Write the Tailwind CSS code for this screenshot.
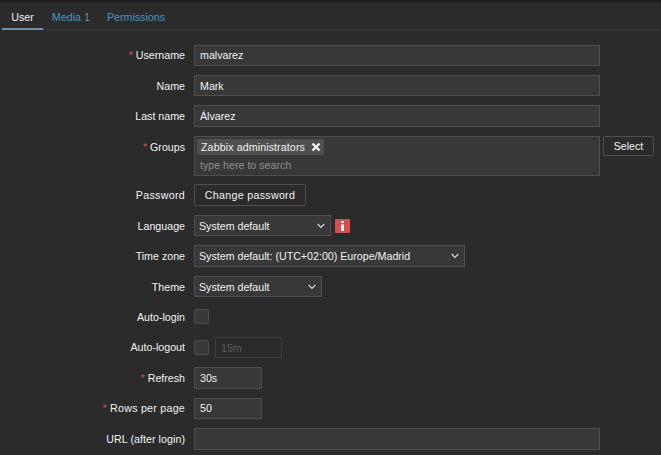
<!DOCTYPE html>
<html lang="en">
<head>
<meta charset="UTF-8" />
<title>User</title>
<script src="https://cdn.jsdelivr.net/npm/@tailwindcss/browser@4"></script>
</head>
<body class="bg-[#2b2b2b] h-[455px] overflow-hidden font-['Liberation_Sans',Arial,sans-serif] text-[10.67px] text-[#f2f2f2]">
  <div class="h-[2px] bg-[#1e1e1e]"></div>

  <!-- Tabs -->
  <div class="flex h-[28px] ml-[2px] border-b border-[#383838] leading-[30px]">
    <div class="w-[41px] text-center border-b-2 border-[#6f8fa3] h-[28px]">User</div>
    <div class="ml-[9px] text-[#4796c4]">Media <span class="text-[#768d99]">1</span></div>
    <div class="ml-[17px] text-[#4796c4]">Permissions</div>
  </div>

  <!-- Form -->
  <div class="flex flex-col pt-[15px] pr-[7px] text-[#f2f2f2]">
    <div class="flex items-center h-[21px]">
      <label class="w-[185px] text-right pb-[1px]"><span class="text-[#d04f4f]">* </span>Username</label>
      <input value="malvarez" class="ml-[9px] w-[406px] h-[21px] px-[5px] pb-[1px] bg-[#383838] border border-[#4f4f4f] outline-none" />
    </div>
    <div class="flex items-center h-[21px] mt-[9px]">
      <label class="w-[185px] text-right">Name</label>
      <input value="Mark" class="ml-[9px] w-[406px] h-[21px] px-[5px] bg-[#383838] border border-[#4f4f4f] outline-none" />
    </div>
    <div class="flex items-center h-[22px] mt-[9px]">
      <label class="w-[185px] text-right">Last name</label>
      <input value="Álvarez" class="ml-[9px] w-[406px] h-[22px] px-[5px] bg-[#383838] border border-[#4f4f4f] outline-none" />
    </div>

    <div class="flex items-start mt-[9px]">
      <label class="w-[185px] text-right leading-[21px] pt-[1px]"><span class="text-[#d04f4f]">* </span>Groups</label>
      <div class="ml-[9px] w-[406px] h-[40px] px-[2px] pt-[2px] bg-[#383838] border border-[#4f4f4f]">
        <div class="flex items-center w-[127px] h-[16px] pl-[4px] bg-[#4f4f4f] rounded-[2px]">
          <span class="tracking-[0.1px]">Zabbix administrators</span>
          <svg class="ml-[6px]" width="10" height="10" viewBox="0 0 10 10"><path d="M1.5 1.5 8.5 8.5M8.5 1.5 1.5 8.5" stroke="#f2f2f2" stroke-width="2.4" /></svg>
        </div>
        <div class="mt-[3px] pl-[3px] text-[#8f8f8f] leading-[14px]">type here to search</div>
      </div>
      <button class="ml-[3px] w-[51px] h-[20px] bg-[#2b2b2b] border border-[#4f4f4f] rounded-[2px]">Select</button>
    </div>

    <div class="flex items-center h-[22px] mt-[8px]">
      <label class="w-[185px] text-right tracking-[0.3px]">Password</label>
      <button class="ml-[9px] w-[112px] h-[22px] bg-[#2b2b2b] border border-[#4f4f4f] rounded-[2px] tracking-[0.3px]">Change password</button>
    </div>

    <div class="flex items-center h-[21px] mt-[9px]">
      <label class="w-[185px] text-right pt-[1px]">Language</label>
      <div class="flex items-center justify-between ml-[9px] w-[137px] h-[21px] pl-[4px] pr-[5px] bg-[#383838] border border-[#4f4f4f]">
        <span>System default</span>
        <svg width="8" height="6" viewBox="0 0 8 6"><path d="M.7 1 4 4.5 7.3 1" fill="none" stroke="#d8d8d8" stroke-width="1.2" /></svg>
      </div>
      <div class="flex items-center justify-center ml-[4px] w-[15px] h-[14px] bg-[#d64e4e] rounded-[1px]">
        <svg width="3" height="10" viewBox="0 0 3 10"><path d="M0 0h3v2H0zM0 3.5h3V10H0z" fill="#fff" /></svg>
      </div>
    </div>

    <div class="flex items-center h-[22px] mt-[9px]">
      <label class="w-[185px] text-right">Time zone</label>
      <div class="flex items-center justify-between ml-[9px] w-[271px] h-[22px] pl-[4px] pr-[5px] bg-[#383838] border border-[#4f4f4f]">
        <span>System default: (UTC+02:00) Europe/Madrid</span>
        <svg width="8" height="6" viewBox="0 0 8 6"><path d="M.7 1 4 4.5 7.3 1" fill="none" stroke="#d8d8d8" stroke-width="1.2" /></svg>
      </div>
    </div>

    <div class="flex items-center h-[21px] mt-[9px]">
      <label class="w-[185px] text-right pt-[1px]">Theme</label>
      <div class="flex items-center justify-between ml-[9px] w-[128px] h-[21px] pl-[4px] pr-[5px] bg-[#383838] border border-[#4f4f4f]">
        <span>System default</span>
        <svg width="8" height="6" viewBox="0 0 8 6"><path d="M.7 1 4 4.5 7.3 1" fill="none" stroke="#d8d8d8" stroke-width="1.2" /></svg>
      </div>
    </div>

    <div class="flex items-center h-[15px] mt-[12px]">
      <label class="w-[185px] text-right pt-[1px]">Auto-login</label>
      <div class="ml-[9px] w-[15px] h-[15px] bg-[#383838] border border-[#4f4f4f] rounded-[2px]"></div>
    </div>

    <div class="flex items-center h-[21px] mt-[13px]">
      <label class="w-[185px] text-right pb-[1px]">Auto-logout</label>
      <div class="ml-[9px] w-[15px] h-[15px] bg-[#383838] border border-[#4f4f4f] rounded-[2px]"></div>
      <input disabled value="15m" class="ml-[6px] w-[67px] h-[21px] px-[5px] bg-[#2b2b2b] border border-[#3d3d3d] text-[#5c5c5c] outline-none" />
    </div>

    <div class="flex items-center h-[22px] mt-[9px]">
      <label class="w-[185px] text-right"><span class="text-[#d04f4f]">* </span>Refresh</label>
      <input value="30s" class="ml-[9px] w-[68px] h-[22px] px-[5px] bg-[#383838] border border-[#4f4f4f] outline-none" />
    </div>
    <div class="flex items-center h-[21px] mt-[9px]">
      <label class="w-[185px] text-right pb-[1px] tracking-[0.25px]"><span class="text-[#d04f4f]">* </span>Rows per page</label>
      <input value="50" class="ml-[9px] w-[68px] h-[21px] px-[5px] pb-[1px] bg-[#383838] border border-[#4f4f4f] outline-none" />
    </div>
    <div class="flex items-center h-[22px] mt-[9px]">
      <label class="w-[185px] text-right tracking-[0.05px]">URL (after login)</label>
      <input class="ml-[9px] w-[406px] h-[22px] px-[5px] bg-[#383838] border border-[#4f4f4f] outline-none" />
    </div>
  </div>
</body>
</html>
